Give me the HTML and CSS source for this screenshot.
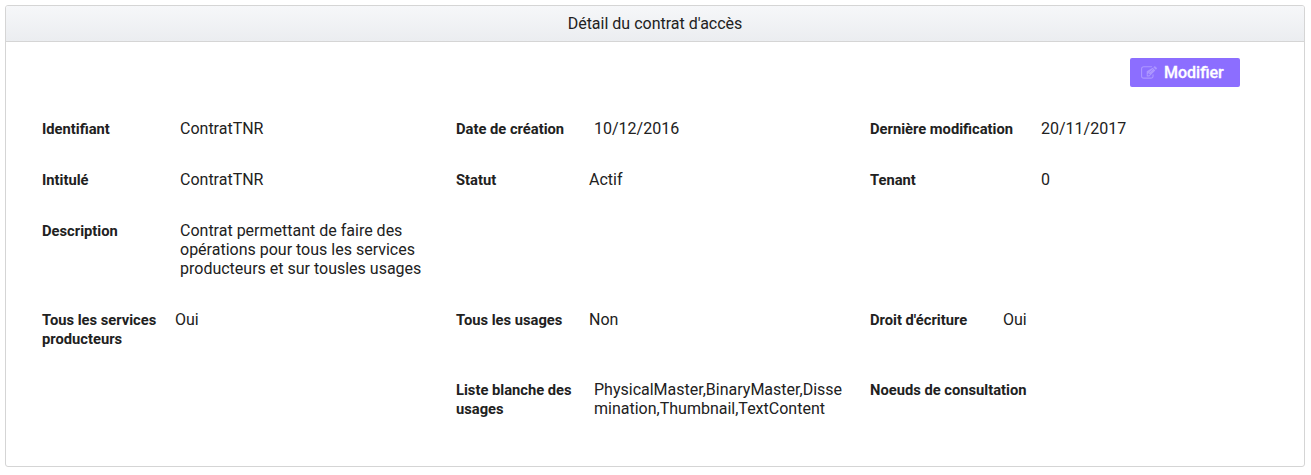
FILE: index.html
```html
<!DOCTYPE html>
<html lang="fr">
<head>
<meta charset="utf-8">
<title>Détail du contrat d'accès</title>
<link rel="stylesheet" href="styles.css">
</head>
<body>
<section class="panel">
  <header class="panel-header">Détail du contrat d'accès</header>
  <div class="panel-body">
    <div class="actions">
      <button class="btn" type="button">
        <svg class="icon" viewBox="0 0 1792 1792" aria-hidden="true"><path d="M888 1184l116-116-152-152-116 116v56h96v96h56zm440-720q-16-16-33 1L945 815q-17 17-1 33t33-1l350-350q17-17 1-33zm80 594v190q0 119-84.500 203.500T1120 1536H288q-119 0-203.500-84.500T0 1248V416q0-119 84.500-203.500T288 128h832q63 0 117 25 15 7 18 23 3 17-9 29l-49 49q-14 14-32 8-23-6-45-6H288q-66 0-113 47t-47 113v832q0 66 47 113t113 47h832q66 0 113-47t47-113v-126q0-13 9-22l64-64q15-15 35-7t20 29zm-96-738l288 288-672 672H640V704zm444 132l-92 92-288-288 92-92q28-28 68-28t68 28l152 152q28 28 28 68t-28 68z"/></svg>
        <span>Modifier</span>
      </button>
    </div>
    <div class="row">
      <div class="field"><span class="label">Identifiant</span><span class="value">ContratTNR</span></div>
      <div class="field"><span class="label">Date de création</span><span class="value">10/12/2016</span></div>
      <div class="field wide"><span class="label">Dernière modification</span><span class="value">20/11/2017</span></div>
    </div>
    <div class="row">
      <div class="field"><span class="label">Intitulé</span><span class="value">ContratTNR</span></div>
      <div class="field select"><span class="label">Statut</span><span class="value">Actif</span></div>
      <div class="field wide"><span class="label">Tenant</span><span class="value">0</span></div>
    </div>
    <div class="row tall">
      <div class="field"><span class="label">Description</span><span class="value">Contrat permettant de faire des opérations pour tous les services producteurs et sur tousles usages</span></div>
    </div>
    <div class="row rights">
      <div class="field select"><span class="label">Tous les services producteurs</span><span class="value">Oui</span></div>
      <div class="field select"><span class="label">Tous les usages</span><span class="value">Non</span></div>
      <div class="field select"><span class="label">Droit d'écriture</span><span class="value">Oui</span></div>
    </div>
    <div class="row">
      <div class="field second"><span class="label">Liste blanche des usages</span><span class="value">PhysicalMaster,BinaryMaster,Dissemination,Thumbnail,TextContent</span></div>
      <div class="field wide"><span class="label">Noeuds de consultation</span><span class="value"></span></div>
    </div>
  </div>
</section>
</body>
</html>
```

FILE: styles.css
```css
* { box-sizing: border-box; }
body { margin: 0; padding: 5px 6px 8px 5px; font: 16px/19px Roboto, sans-serif; color: #212121; background: #fff; }
.panel { height: 462px; border: 1px solid #d5d5d5; border-radius: 3px; overflow: hidden; }
.panel-header { height: 36px; border-bottom: 1px solid #d5d5d5; background: linear-gradient(#f6f7f9, #ebedf0); text-align: center; line-height: 35px; }
.panel-body { padding: 16px 22px 0 36px; }
.actions { display: flex; justify-content: flex-end; padding-right: 42px; height: 61px; }
.btn { display: flex; align-items: center; gap: 7px; width: 110px; height: 29px; padding: 0 0 0 11px; border: 0; border-radius: 2px; background: #8c6eff; color: #fff; font: 500 16px/29px Roboto, sans-serif; -webkit-text-stroke: 0.3px #fff; }
.icon { width: 16px; height: 16px; fill: #ac96ff; }
.row { display: grid; grid-template-columns: repeat(3, 414px); height: 51px; }
.row.tall { height: 89px; }
.row.rights { height: 70px; }
.field { display: grid; grid-template-columns: 138px 250px; align-items: start; }
.field.select { grid-template-columns: 133px 255px; }
.field.wide { grid-template-columns: 171px 217px; }
.field.second { grid-column: 2; }
.label { font-size: 14.72px; font-weight: 700; padding-top: 1px; }
.value { overflow-wrap: anywhere; }
```
